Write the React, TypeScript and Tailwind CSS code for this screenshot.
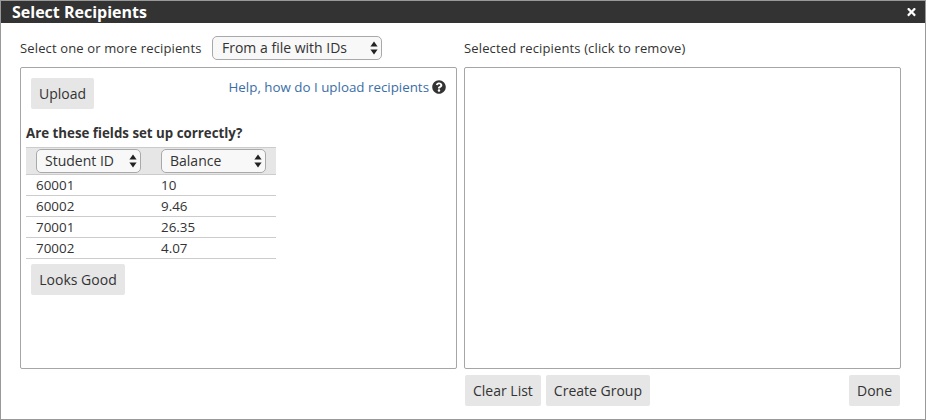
import { FaQuestionCircle, FaTimes } from "react-icons/fa";

const Arrows = ({ className }: { className: string }) => (
  <svg
    viewBox="0 0 8 14"
    className={`absolute pointer-events-none w-[8px] h-[14px] fill-[#222] ${className}`}
  >
    <path d="M4 0.5 L7.6 5.6 L0.4 5.6 Z" />
    <path d="M4 13.5 L7.6 8.4 L0.4 8.4 Z" />
  </svg>
);

const Picker = ({ value, width, pad = "pl-[8px]" }: { value: string; width: string; pad?: string }) => (
  <div className={`relative h-[24px] ${width}`}>
    <select
      defaultValue={value}
      className={`appearance-none w-full h-full rounded-[5px] border border-[#a9a9a9] bg-[#f8f8f8] text-[14px] leading-[20px] text-[#333] outline-none ${pad}`}
    >
      <option>{value}</option>
    </select>
    <Arrows className="right-[4px] top-[5px]" />
  </div>
);

const Btn = ({ label, className = "" }: { label: string; className?: string }) => (
  <button className={`h-[31px] px-[8px] rounded-[2px] bg-[#e6e6e6] text-[14px] text-[#333] ${className}`}>
    {label}
  </button>
);

const rows = [
  ["60001", "10"],
  ["60002", "9.46"],
  ["70001", "26.35"],
  ["70002", "4.07"],
];

export default function App() {
  return (
    <div className="w-[926px] h-[420px] flex flex-col bg-white border border-[#999] font-['Open_Sans',sans-serif] text-[14px] text-[#333]">
      <div className="h-[22px] shrink-0 bg-[#333] flex items-center justify-between pl-[11px] pr-[8px] text-white">
        <span className="text-[16px] font-bold leading-[22px]">Select Recipients</span>
        <FaTimes className="w-[11px] h-[12px]" />
      </div>

      <div className="flex-1 flex gap-[7px] pl-[19px] pr-[24px]">
        <div className="w-[437px] flex flex-col">
          <div className="h-[44px] shrink-0 flex items-start pt-[13px]">
            <span className="leading-[24px] text-[13px] tracking-[0.14px] w-[192px]">Select one or more recipients</span>
            <Picker value="From a file with IDs" width="w-[170px]" pad="pl-[9px]" />
          </div>
          <div className="h-[302px] border border-[#a6a6a6] rounded-[2px] pt-[10px] pl-[5px] flex flex-col">
            <div className="flex justify-between pl-[5px] pr-[10px]">
              <Btn label="Upload" />
              <div className="flex items-center gap-[3px] h-[18px] text-[13.35px] leading-[18px]">
                <span className="text-[#3a6ea5]">Help, how do I upload recipients</span>
                <FaQuestionCircle className="w-[14px] h-[14px] text-[#333]" />
              </div>
            </div>
            <div className="mt-[14px] font-bold leading-[20px] text-[13.3px]">Are these fields set up correctly?</div>
            <div className="w-[250px] mt-[4px]">
              <div className="h-[28px] bg-[#e6e6e6] border-y border-[#ccc] flex items-center gap-[20px] pl-[10px]">
                <Picker value="Student ID" width="w-[105px]" />
                <Picker value="Balance" width="w-[105px]" />
              </div>
              {rows.map(([id, balance]) => (
                <div key={id} className="h-[21px] flex items-center border-b border-[#ccc] pl-[10px] leading-[20px] text-[13.4px]">
                  <span className="w-[125px]">{id}</span>
                  <span>{balance}</span>
                </div>
              ))}
            </div>
            <div className="mt-[5px] pl-[5px]">
              <Btn label="Looks Good" className="w-[94px]" />
            </div>
          </div>
        </div>

        <div className="w-[437px] flex flex-col">
          <div className="h-[44px] shrink-0 pt-[13px] leading-[24px] text-[13px] tracking-[0.14px]">
            Selected recipients (click to remove)
          </div>
          <div className="h-[302px] border border-[#a6a6a6] rounded-[2px]" />
          <div className="mt-[6px] flex items-center gap-[5px] pl-[1px] pr-[1px]">
            <Btn label="Clear List" />
            <Btn label="Create Group" />
            <div className="ml-auto">
              <Btn label="Done" />
            </div>
          </div>
        </div>
      </div>
    </div>
  );
}
